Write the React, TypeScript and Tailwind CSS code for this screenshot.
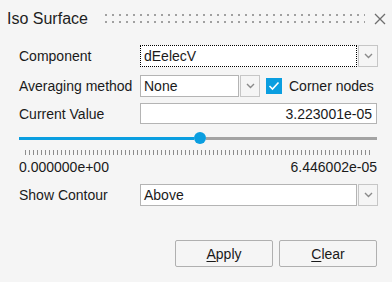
import React from 'react';

const Chevron: React.FC = () => (
  <svg width="9" height="6" viewBox="0 0 9 6" className="block">
    <path d="M1 1 L4.5 4.5 L8 1" fill="none" stroke="#8a8a8a" strokeWidth="1.4" />
  </svg>
);

interface ComboProps {
  value: string;
  width: string;
  focused?: boolean;
}

const Combo: React.FC<ComboProps> = ({ value, width, focused }) => (
  <div className="flex h-[22px]">
    <div
      className={`${width} h-full bg-white flex items-center pl-[3px] border ${
        focused ? 'border-dotted border-black' : 'border-[#b4b4b4]'
      }`}
    >
      {value}
    </div>
    <div className="w-[20px] h-full ml-[1px] border border-[#c6c6c6] bg-[#f5f5f5] flex items-center justify-center">
      <Chevron />
    </div>
  </div>
);

const ticks = Array.from({ length: 87 });

const App: React.FC = () => {
  return (
    <div className="w-[392px] h-[282px] bg-[#f5f5f5] text-[#1a1a1a] text-[14px] leading-[16px] font-['Liberation_Sans',Arial,sans-serif] overflow-hidden">
      {/* title bar */}
      <div className="h-[38px] flex items-center pl-[7px] pr-[6px]">
        <span className="text-[16px] text-[#1e1e1e] mt-[-1px]">Iso Surface</span>
        <svg width="260" height="10" className="ml-[17px] mt-[-1px]">
          <defs>
            <pattern id="grip" width="7" height="7" patternUnits="userSpaceOnUse">
              <rect x="0" y="0" width="2" height="2" fill="#a0a0a0" />
            </pattern>
          </defs>
          <rect x="0" y="0" width="260" height="9" fill="url(#grip)" />
        </svg>
        <svg width="12" height="12" viewBox="0 0 12 12" className="ml-[9px] mt-[-1px]">
          <path d="M1 1 L11 11 M11 1 L1 11" stroke="#6e6e6e" strokeWidth="1.3" />
        </svg>
      </div>

      <div className="pl-[19px]">
        {/* component */}
        <div className="flex items-center mt-[7px]">
          <span className="w-[121px]">Component</span>
          <Combo value="dEelecV" width="w-[217px]" focused />
        </div>

        {/* averaging */}
        <div className="flex items-center mt-[8px]">
          <span className="w-[121px]">Averaging method</span>
          <Combo value="None" width="w-[99px]" />
          <div className="ml-[6px] w-[16px] h-[16px] bg-[#0a9ee0] flex items-center justify-center">
            <svg width="12" height="10" viewBox="0 0 12 10">
              <path d="M1.5 5 L4.5 8 L10.5 1.5" fill="none" stroke="white" strokeWidth="1.6" />
            </svg>
          </div>
          <span className="ml-[7px]">Corner nodes</span>
        </div>

        {/* current value */}
        <div className="flex items-center mt-[6px]">
          <span className="w-[121px]">Current Value</span>
          <div className="w-[237px] h-[21px] bg-white border border-[#b4b4b4] flex items-center justify-end pr-[4px]">
            3.223001e-05
          </div>
        </div>

        {/* slider */}
        <div className="mt-[8px] w-[358px] h-[12px] flex items-center">
          <div className="w-[175px] h-[3px] bg-[#0a9ee0]" />
          <div className="w-[12px] h-[12px] rounded-full bg-[#0a9ee0]" />
          <div className="flex-1 h-[3px] bg-[#a3a3a3]" />
        </div>

        {/* ticks */}
        <div className="mt-[6px] ml-[6px] w-[346px] h-[5px] flex justify-between">
          {ticks.map((_, i) => (
            <div key={i} className="w-[1px] h-full bg-[#8c8c8c]" />
          ))}
        </div>

        <div className="mt-[4px] w-[358px] flex justify-between">
          <span>0.000000e+00</span>
          <span>6.446002e-05</span>
        </div>

        {/* show contour */}
        <div className="flex items-center mt-[9px]">
          <span className="w-[121px]">Show Contour</span>
          <Combo value="Above" width="w-[217px]" />
        </div>
      </div>

      {/* buttons */}
      <div className="mt-[34px] pr-[15px] flex justify-end gap-[6px]">
        <button className="w-[98px] h-[27px] border border-[#b0b0b0] rounded-[2px] bg-[#f5f5f5] text-[#1a1a1a]">
          <span className="underline underline-offset-2">A</span>pply
        </button>
        <button className="w-[98px] h-[27px] border border-[#b0b0b0] rounded-[2px] bg-[#f5f5f5] text-[#1a1a1a]">
          <span className="underline underline-offset-2">C</span>lear
        </button>
      </div>
    </div>
  );
};

export default App;
